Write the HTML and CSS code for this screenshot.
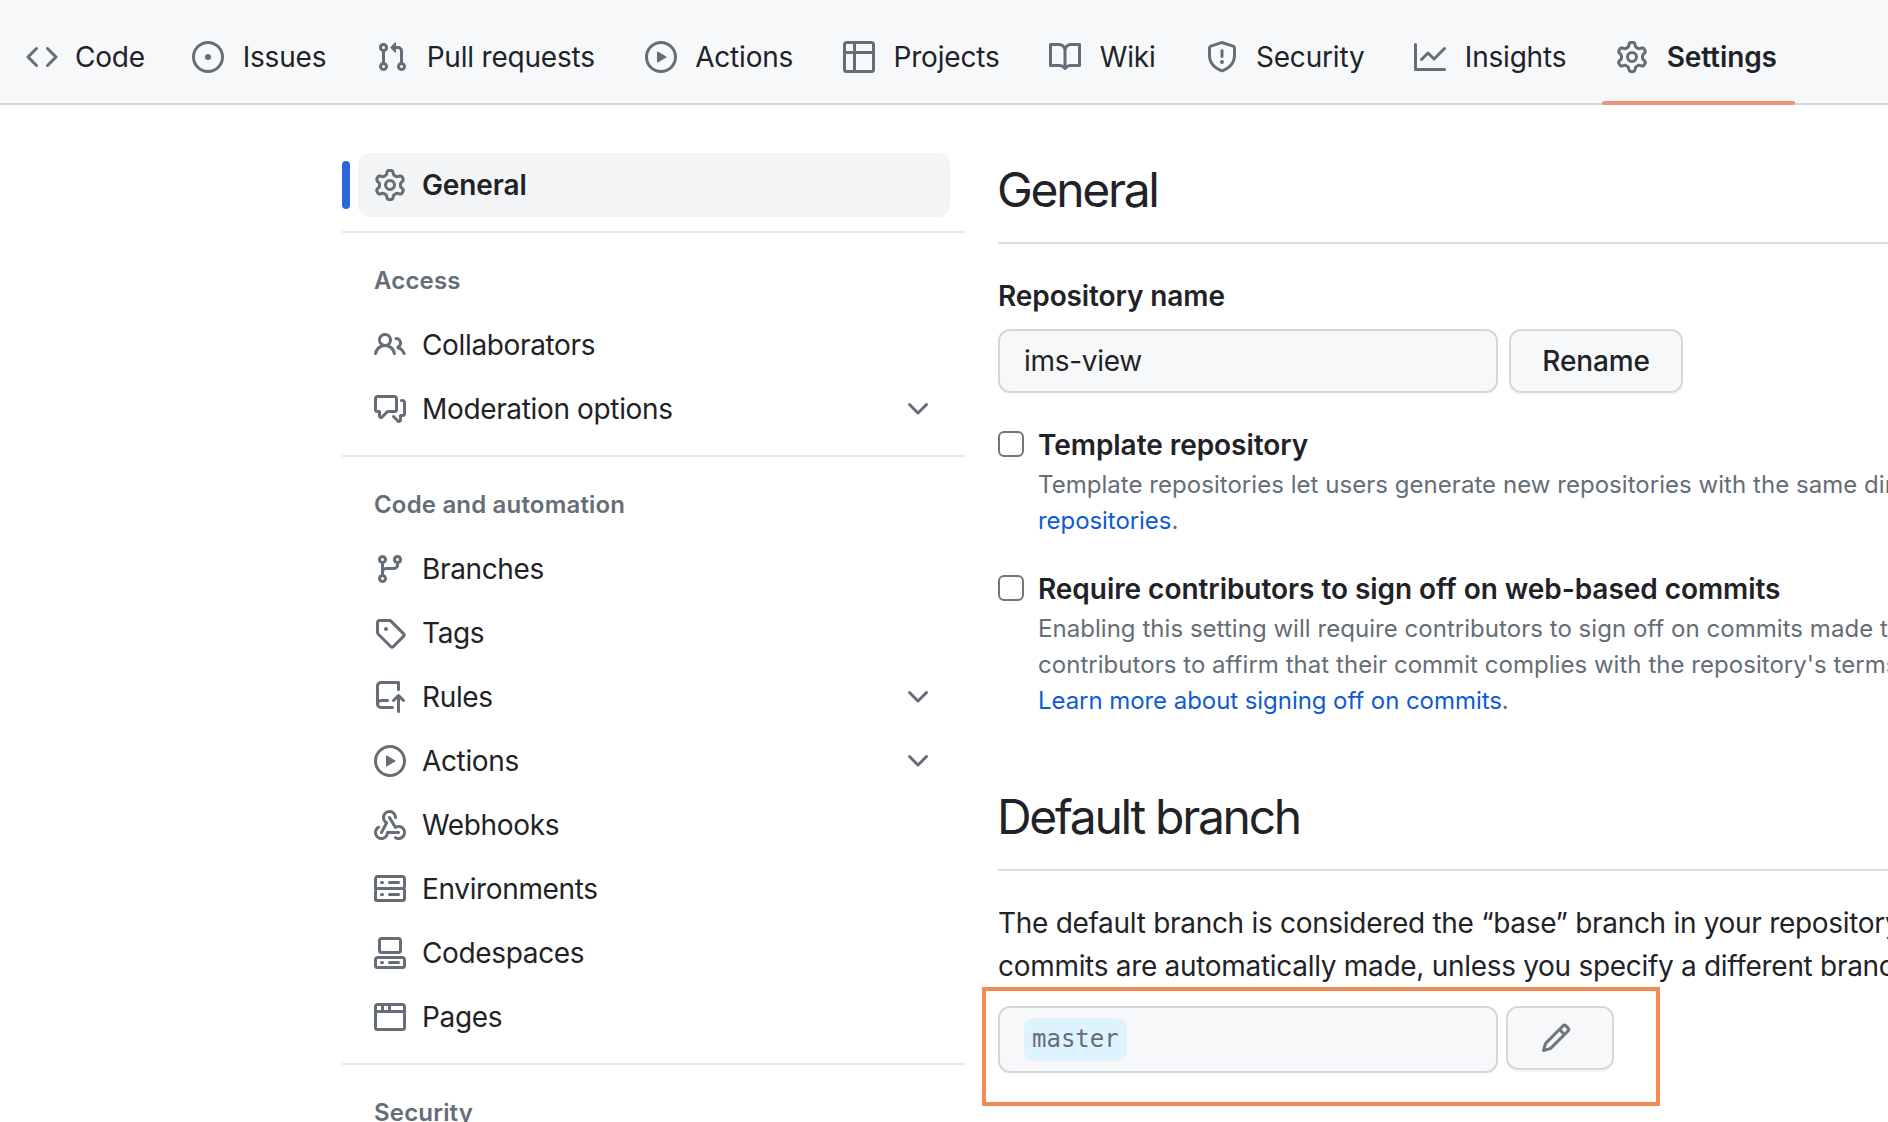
FILE: index.html
```html
<!DOCTYPE html>
<html lang="en">
<head>
    <meta charset="UTF-8">
    <meta name="viewport" content="width=device-width, initial-scale=1.0">
    <title>General - Settings</title>
    <link rel="stylesheet" href="styles.css">
</head>
<body>

    <svg class="icon-defs" aria-hidden="true">
        <symbol id="i-code" viewBox="0 0 16 16"><path d="m11.28 3.22 4.25 4.25a.75.75 0 0 1 0 1.06l-4.25 4.25a.749.749 0 0 1-1.275-.326.749.749 0 0 1 .215-.734L13.94 8l-3.72-3.72a.749.749 0 0 1 .326-1.275.749.749 0 0 1 .734.215Zm-6.56 0a.751.751 0 0 1 1.042.018.751.751 0 0 1 .018 1.042L2.06 8l3.72 3.72a.749.749 0 0 1-.326 1.275.749.749 0 0 1-.734-.215L.47 8.53a.75.75 0 0 1 0-1.06Z"/></symbol>
        <symbol id="i-issue" viewBox="0 0 16 16"><path d="M8 9.5a1.5 1.5 0 1 0 0-3 1.5 1.5 0 0 0 0 3Z"/><path d="M8 0a8 8 0 1 1 0 16A8 8 0 0 1 8 0ZM1.5 8a6.5 6.5 0 1 0 13 0 6.5 6.5 0 0 0-13 0Z"/></symbol>
        <symbol id="i-pull" viewBox="0 0 16 16"><path d="M1.5 3.25a2.25 2.25 0 1 1 3 2.122v5.256a2.251 2.251 0 1 1-1.5 0V5.372A2.25 2.25 0 0 1 1.5 3.25Zm5.677-.177L9.573.677A.25.25 0 0 1 10 .854V2.5h1A2.5 2.5 0 0 1 13.5 5v5.628a2.251 2.251 0 1 1-1.5 0V5a1 1 0 0 0-1-1h-1v1.646a.25.25 0 0 1-.427.177L7.177 3.427a.25.25 0 0 1 0-.354ZM3.75 2.5a.75.75 0 1 0 0 1.5.75.75 0 0 0 0-1.5Zm0 9.5a.75.75 0 1 0 0 1.5.75.75 0 0 0 0-1.5Zm8.25.75a.75.75 0 1 0 1.5 0 .75.75 0 0 0-1.5 0Z"/></symbol>
        <symbol id="i-play" viewBox="0 0 16 16"><path d="M8 0a8 8 0 1 1 0 16A8 8 0 0 1 8 0ZM1.5 8a6.5 6.5 0 1 0 13 0 6.5 6.5 0 0 0-13 0Zm4.879-2.773 4.264 2.559a.25.25 0 0 1 0 .428l-4.264 2.559A.25.25 0 0 1 6 10.559V5.442a.25.25 0 0 1 .379-.215Z"/></symbol>
        <symbol id="i-table" viewBox="0 0 16 16"><path d="M0 1.75C0 .784.784 0 1.75 0h12.5C15.216 0 16 .784 16 1.75v12.5A1.75 1.75 0 0 1 14.25 16H1.75A1.75 1.75 0 0 1 0 14.25ZM6.5 6.5v8h7.75a.25.25 0 0 0 .25-.25V6.5Zm8-1.5V1.75a.25.25 0 0 0-.25-.25H6.5V5Zm-13 1.5v7.75c0 .138.112.25.25.25H5v-8ZM5 5V1.5H1.75a.25.25 0 0 0-.25.25V5Z"/></symbol>
        <symbol id="i-book" viewBox="0 0 16 16"><path d="M0 1.75A.75.75 0 0 1 .75 1h4.253c1.227 0 2.317.59 3 1.501A3.743 3.743 0 0 1 11.006 1h4.245a.75.75 0 0 1 .75.75v10.5a.75.75 0 0 1-.75.75h-4.507a2.25 2.25 0 0 0-1.591.659l-.622.621a.75.75 0 0 1-1.06 0l-.622-.621A2.25 2.25 0 0 0 5.258 13H.75a.75.75 0 0 1-.75-.75Zm7.251 10.324.004-5.073-.002-2.253A2.25 2.25 0 0 0 5.003 2.5H1.5v9h3.757a3.75 3.75 0 0 1 1.994.574ZM8.755 4.75l-.004 7.322a3.752 3.752 0 0 1 1.992-.572H14.5v-9h-3.495a2.25 2.25 0 0 0-2.25 2.25Z"/></symbol>
        <symbol id="i-shield" viewBox="0 0 16 16"><path d="M7.467.133a1.748 1.748 0 0 1 1.066 0l5.25 1.68A1.75 1.75 0 0 1 15 3.48V7c0 1.566-.32 3.182-1.303 4.682-.983 1.498-2.585 2.813-5.032 3.855a1.697 1.697 0 0 1-1.33 0c-2.447-1.042-4.049-2.357-5.032-3.855C1.32 10.182 1 8.566 1 7V3.48a1.75 1.75 0 0 1 1.217-1.667Zm.61 1.429a.25.25 0 0 0-.153 0l-5.25 1.68a.25.25 0 0 0-.174.238V7c0 1.358.275 2.666 1.057 3.86.784 1.194 2.121 2.34 4.366 3.297a.196.196 0 0 0 .154 0c2.245-.956 3.582-2.104 4.366-3.298C13.225 9.666 13.5 8.36 13.5 7V3.48a.251.251 0 0 0-.174-.237l-5.25-1.68ZM8.75 4.75v3a.75.75 0 0 1-1.5 0v-3a.75.75 0 0 1 1.5 0ZM9 10.5a1 1 0 1 1-2 0 1 1 0 0 1 2 0Z"/></symbol>
        <symbol id="i-graph" viewBox="0 0 16 16"><path d="M1.5 1.75V13.5h13.75a.75.75 0 0 1 0 1.5H.75a.75.75 0 0 1-.75-.75V1.75a.75.75 0 0 1 1.5 0Zm14.28 2.53-5.25 5.25a.75.75 0 0 1-1.06 0L7 7.06 4.28 9.78a.751.751 0 0 1-1.042-.018.751.751 0 0 1-.018-1.042l3.25-3.25a.75.75 0 0 1 1.06 0L10 7.94l4.72-4.72a.751.751 0 0 1 1.042.018.751.751 0 0 1 .018 1.042Z"/></symbol>
        <symbol id="i-gear" viewBox="0 0 16 16"><path d="M8 0a8.2 8.2 0 0 1 .701.031C9.444.095 9.99.645 10.16 1.29l.288 1.107c.018.066.079.158.212.224.231.114.454.243.668.386.123.082.233.09.299.071l1.103-.303c.644-.176 1.392.021 1.82.63.27.385.506.792.704 1.218.315.675.111 1.422-.364 1.891l-.814.806c-.049.048-.098.147-.088.294.016.257.016.515 0 .772-.01.147.038.246.088.294l.814.806c.475.469.679 1.216.364 1.891a7.977 7.977 0 0 1-.704 1.217c-.428.61-1.176.807-1.82.63l-1.102-.302c-.067-.019-.177-.011-.3.071a5.909 5.909 0 0 1-.668.386c-.133.066-.194.158-.211.224l-.29 1.106c-.168.646-.715 1.196-1.458 1.26a8.006 8.006 0 0 1-1.402 0c-.743-.064-1.289-.614-1.458-1.26l-.289-1.106c-.018-.066-.079-.158-.212-.224a5.738 5.738 0 0 1-.668-.386c-.123-.082-.233-.09-.299-.071l-1.103.303c-.644.176-1.392-.021-1.82-.63a8.12 8.12 0 0 1-.704-1.218c-.315-.675-.111-1.422.363-1.891l.815-.806c.05-.048.098-.147.088-.294a6.214 6.214 0 0 1 0-.772c.01-.147-.038-.246-.088-.294l-.815-.806C.635 6.045.431 5.298.746 4.623a7.92 7.92 0 0 1 .704-1.217c.428-.61 1.176-.807 1.82-.63l1.102.302c.067.019.177.011.3-.071.214-.143.437-.272.668-.386.133-.066.194-.158.211-.224l.29-1.106C6.009.645 6.556.095 7.299.03 7.53.01 7.764 0 8 0Zm-.571 1.525c-.036.003-.108.036-.137.146l-.289 1.105c-.147.561-.549.967-.998 1.189-.173.086-.34.183-.5.29-.417.278-.97.423-1.529.27l-1.103-.303c-.109-.03-.175.016-.195.045-.22.312-.412.644-.573.99-.014.031-.021.11.059.19l.815.806c.411.406.562.957.53 1.456a4.709 4.709 0 0 0 0 .582c.032.499-.119 1.05-.53 1.456l-.815.806c-.081.08-.073.159-.059.19.162.346.353.677.573.989.02.03.085.076.195.046l1.102-.303c.56-.153 1.113-.008 1.53.27.161.107.328.204.501.29.447.222.85.629.997 1.189l.289 1.105c.029.109.101.143.137.146a6.6 6.6 0 0 0 1.142 0c.036-.003.108-.036.137-.146l.289-1.105c.147-.561.549-.967.998-1.189.173-.086.34-.183.5-.29.417-.278.97-.423 1.529-.27l1.103.303c.109.029.175-.016.195-.045.22-.313.411-.644.573-.99.014-.031.021-.11-.059-.19l-.815-.806c-.411-.406-.562-.957-.53-1.456a4.709 4.709 0 0 0 0-.582c-.032-.499.119-1.05.53-1.456l.815-.806c.081-.08.073-.159.059-.19a6.464 6.464 0 0 0-.573-.989c-.02-.03-.085-.076-.195-.046l-1.102.303c-.56.153-1.113.008-1.53-.27a4.44 4.44 0 0 0-.501-.29c-.447-.222-.85-.629-.997-1.189l-.289-1.105c-.029-.11-.101-.143-.137-.146a6.6 6.6 0 0 0-1.142 0ZM11 8a3 3 0 1 1-6 0 3 3 0 0 1 6 0ZM9.5 8a1.5 1.5 0 1 0-3.001.001A1.5 1.5 0 0 0 9.5 8Z"/></symbol>
        <symbol id="i-people" viewBox="0 0 16 16"><path d="M2 5.5a3.5 3.5 0 1 1 5.898 2.549 5.508 5.508 0 0 1 3.034 4.084.75.75 0 1 1-1.482.235 4 4 0 0 0-7.9 0 .75.75 0 0 1-1.482-.236A5.507 5.507 0 0 1 3.102 8.05 3.493 3.493 0 0 1 2 5.5ZM11 4a3.001 3.001 0 0 1 2.22 5.018 5.01 5.01 0 0 1 2.56 3.012.749.749 0 0 1-.885.954.752.752 0 0 1-.549-.514 3.507 3.507 0 0 0-2.522-2.372.75.75 0 0 1-.574-.73v-.352a.75.75 0 0 1 .416-.672A1.5 1.5 0 0 0 11 5.5.75.75 0 0 1 11 4Zm-5.5-.5a2 2 0 1 0-.001 3.999A2 2 0 0 0 5.5 3.5Z"/></symbol>
        <symbol id="i-comments" viewBox="0 0 16 16"><path d="M1.75 1h8.5c.966 0 1.75.784 1.75 1.75v5.5A1.75 1.75 0 0 1 10.25 10H7.061l-2.574 2.573A1.458 1.458 0 0 1 2 11.543V10h-.25A1.75 1.75 0 0 1 0 8.25v-5.5C0 1.784.784 1 1.75 1ZM1.5 2.75v5.5c0 .138.112.25.25.25h1a.75.75 0 0 1 .75.75v2.19l2.72-2.72a.749.749 0 0 1 .53-.22h3.5a.25.25 0 0 0 .25-.25v-5.5a.25.25 0 0 0-.25-.25h-8.5a.25.25 0 0 0-.25.25Zm13 2a.25.25 0 0 0-.25-.25h-.5a.75.75 0 0 1 0-1.5h.5c.966 0 1.75.784 1.75 1.75v5.5A1.75 1.75 0 0 1 14.25 12H14v1.543a1.458 1.458 0 0 1-2.487 1.03L9.22 12.28a.749.749 0 0 1 .326-1.275.749.749 0 0 1 .734.215l2.22 2.22v-2.19a.75.75 0 0 1 .75-.75h1a.25.25 0 0 0 .25-.25Z"/></symbol>
        <symbol id="i-branch" viewBox="0 0 16 16"><path d="M9.5 3.25a2.25 2.25 0 1 1 3 2.122V6A2.5 2.5 0 0 1 10 8.5H6a1 1 0 0 0-1 1v1.128a2.251 2.251 0 1 1-1.5 0V5.372a2.25 2.25 0 1 1 1.5 0v1.836A2.493 2.493 0 0 1 6 7h4a1 1 0 0 0 1-1v-.628A2.25 2.25 0 0 1 9.5 3.25Zm-6 0a.75.75 0 1 0 1.5 0 .75.75 0 0 0-1.5 0Zm8.25-.75a.75.75 0 1 0 0 1.5.75.75 0 0 0 0-1.5ZM4.25 12a.75.75 0 1 0 0 1.5.75.75 0 0 0 0-1.5Z"/></symbol>
        <symbol id="i-tag" viewBox="0 0 16 16"><path d="M1 7.775V2.75C1 1.784 1.784 1 2.75 1h5.025c.464 0 .91.184 1.238.513l6.25 6.25a1.75 1.75 0 0 1 0 2.474l-5.026 5.026a1.75 1.75 0 0 1-2.474 0l-6.25-6.25A1.752 1.752 0 0 1 1 7.775Zm1.5 0c0 .066.026.13.073.177l6.25 6.25a.25.25 0 0 0 .354 0l5.025-5.025a.25.25 0 0 0 0-.354l-6.25-6.25a.25.25 0 0 0-.177-.073H2.75a.25.25 0 0 0-.25.25ZM6 5a1 1 0 1 1 0 2 1 1 0 0 1 0-2Z"/></symbol>
        <symbol id="i-rules" viewBox="0 0 16 16"><path d="M1 2.5A2.5 2.5 0 0 1 3.5 0h8.75a.75.75 0 0 1 .75.75v3.5a.75.75 0 0 1-1.5 0V1.5h-8a1 1 0 0 0-1 1v6.708A2.493 2.493 0 0 1 3.5 9h3.25a.75.75 0 0 1 0 1.5H3.5a1 1 0 0 0 0 2h5.75a.75.75 0 0 1 0 1.5H3.5A2.5 2.5 0 0 1 1 11.5Zm13.23 7.79h-.001l-1.224-1.224v6.184a.75.75 0 0 1-1.5 0V9.066L10.28 10.29a.75.75 0 0 1-1.06-1.061l2.505-2.504a.75.75 0 0 1 1.06 0L15.29 9.23a.751.751 0 0 1-.018 1.042.751.751 0 0 1-1.042.018Z"/></symbol>
        <symbol id="i-webhook" viewBox="0 0 16 16"><path d="M5.5 4.25a2.25 2.25 0 0 1 4.5 0 .75.75 0 0 0 1.5 0 3.75 3.75 0 1 0-6.14 2.889l-2.272 4.258a.75.75 0 0 0 1.324.706L7 7.25a.75.75 0 0 0-.309-1.015A2.25 2.25 0 0 1 5.5 4.25Z"/><path d="M7.364 3.607a.75.75 0 0 1 1.03.257l2.608 4.349a3.75 3.75 0 1 1-.628 6.785.75.75 0 0 1 .752-1.299 2.25 2.25 0 1 0-.033-3.88.75.75 0 0 1-1.03-.256L7.107 4.636a.75.75 0 0 1 .257-1.03Z"/><path d="M2.9 8.776A.75.75 0 0 1 2.625 9.8 2.25 2.25 0 1 0 6 11.75a.75.75 0 0 1 .75-.751h5.5a.75.75 0 0 1 0 1.5H7.425a3.751 3.751 0 1 1-5.55-3.998.75.75 0 0 1 1.024.274Z"/></symbol>
        <symbol id="i-server" viewBox="0 0 16 16"><path d="M1.75 1h12.5c.966 0 1.75.784 1.75 1.75v4c0 .372-.116.717-.314 1 .198.283.314.628.314 1v4a1.75 1.75 0 0 1-1.75 1.75H1.75A1.75 1.75 0 0 1 0 13.75v-4c0-.372.116-.717.314-1a1.739 1.739 0 0 1-.314-1v-4C0 1.784.784 1 1.75 1ZM1.5 2.75v4c0 .138.112.25.25.25h12.5a.25.25 0 0 0 .25-.25v-4a.25.25 0 0 0-.25-.25H1.75a.25.25 0 0 0-.25.25Zm.25 5.75a.25.25 0 0 0-.25.25v4c0 .138.112.25.25.25h12.5a.25.25 0 0 0 .25-.25v-4a.25.25 0 0 0-.25-.25ZM7 4.75A.75.75 0 0 1 7.75 4h4.5a.75.75 0 0 1 0 1.5h-4.5A.75.75 0 0 1 7 4.75ZM7.75 10h4.5a.75.75 0 0 1 0 1.5h-4.5a.75.75 0 0 1 0-1.5ZM3 4.75A.75.75 0 0 1 3.75 4h.5a.75.75 0 0 1 0 1.5h-.5A.75.75 0 0 1 3 4.75ZM3.75 10h.5a.75.75 0 0 1 0 1.5h-.5a.75.75 0 0 1 0-1.5Z"/></symbol>
        <symbol id="i-codespaces" viewBox="0 0 16 16"><path d="M0 11.25c0-.966.784-1.75 1.75-1.75h12.5c.966 0 1.75.784 1.75 1.75v3A1.75 1.75 0 0 1 14.25 16H1.75A1.75 1.75 0 0 1 0 14.25Zm2-9.5C2 .784 2.784 0 3.75 0h8.5C13.216 0 14 .784 14 1.75v5a1.75 1.75 0 0 1-1.75 1.75h-8.5A1.75 1.75 0 0 1 2 6.75Zm1.75-.25a.25.25 0 0 0-.25.25v5c0 .138.112.25.25.25h8.5a.25.25 0 0 0 .25-.25v-5a.25.25 0 0 0-.25-.25Zm-2 9.5a.25.25 0 0 0-.25.25v3c0 .138.112.25.25.25h12.5a.25.25 0 0 0 .25-.25v-3a.25.25 0 0 0-.25-.25Z"/><path d="M7 12.75a.75.75 0 0 1 .75-.75h4.5a.75.75 0 0 1 0 1.5h-4.5a.75.75 0 0 1-.75-.75Zm-4 0a.75.75 0 0 1 .75-.75h.5a.75.75 0 0 1 0 1.5h-.5a.75.75 0 0 1-.75-.75Z"/></symbol>
        <symbol id="i-browser" viewBox="0 0 16 16"><path d="M0 2.75C0 1.784.784 1 1.75 1h12.5c.966 0 1.75.784 1.75 1.75v10.5A1.75 1.75 0 0 1 14.25 15H1.75A1.75 1.75 0 0 1 0 13.25ZM14.5 6h-13v7.25c0 .138.112.25.25.25h12.5a.25.25 0 0 0 .25-.25Zm-6-3.5v2h6V2.75a.25.25 0 0 0-.25-.25ZM5 2.5v2h2v-2Zm-3.25 0a.25.25 0 0 0-.25.25V4.5h2v-2Z"/></symbol>
        <symbol id="i-pencil" viewBox="0 0 16 16"><path d="M11.013 1.427a1.75 1.75 0 0 1 2.474 0l1.086 1.086a1.75 1.75 0 0 1 0 2.474l-8.61 8.61c-.21.21-.47.364-.756.445l-3.251.93a.75.75 0 0 1-.927-.928l.929-3.25c.081-.286.235-.547.445-.758l8.61-8.61Zm.176 4.823L9.75 4.81l-6.286 6.287a.253.253 0 0 0-.064.108l-.558 1.953 1.953-.558a.253.253 0 0 0 .108-.064Zm1.238-3.763a.25.25 0 0 0-.354 0L10.811 3.75l1.439 1.44 1.263-1.263a.25.25 0 0 0 0-.354Z"/></symbol>
        <symbol id="i-chevron" viewBox="0 0 16 16"><path d="M12.78 5.22a.749.749 0 0 1 0 1.06l-4.25 4.25a.749.749 0 0 1-1.06 0L3.22 6.28a.749.749 0 1 1 1.06-1.06L8 8.939l3.72-3.719a.749.749 0 0 1 1.06 0Z"/></symbol>
    </svg>

    <nav class="repo-nav">
        <a class="tab"><svg class="icon"><use href="#i-code"/></svg>Code</a>
        <a class="tab"><svg class="icon"><use href="#i-issue"/></svg>Issues</a>
        <a class="tab"><svg class="icon"><use href="#i-pull"/></svg>Pull requests</a>
        <a class="tab"><svg class="icon"><use href="#i-play"/></svg>Actions</a>
        <a class="tab"><svg class="icon"><use href="#i-table"/></svg>Projects</a>
        <a class="tab"><svg class="icon"><use href="#i-book"/></svg>Wiki</a>
        <a class="tab"><svg class="icon"><use href="#i-shield"/></svg>Security</a>
        <a class="tab"><svg class="icon"><use href="#i-graph"/></svg>Insights</a>
        <a class="tab tab-current"><svg class="icon"><use href="#i-gear"/></svg>Settings</a>
    </nav>

    <div class="layout">
        <aside class="sidebar">
            <a class="side-item side-current"><svg class="icon"><use href="#i-gear"/></svg>General</a>

            <hr class="side-divider">
            <h3 class="side-heading">Access</h3>
            <a class="side-item"><svg class="icon"><use href="#i-people"/></svg>Collaborators</a>
            <a class="side-item"><svg class="icon"><use href="#i-comments"/></svg>Moderation options<svg class="icon chevron"><use href="#i-chevron"/></svg></a>

            <hr class="side-divider">
            <h3 class="side-heading">Code and automation</h3>
            <a class="side-item"><svg class="icon"><use href="#i-branch"/></svg>Branches</a>
            <a class="side-item"><svg class="icon"><use href="#i-tag"/></svg>Tags</a>
            <a class="side-item"><svg class="icon"><use href="#i-rules"/></svg>Rules<svg class="icon chevron"><use href="#i-chevron"/></svg></a>
            <a class="side-item"><svg class="icon"><use href="#i-play"/></svg>Actions<svg class="icon chevron"><use href="#i-chevron"/></svg></a>
            <a class="side-item"><svg class="icon"><use href="#i-webhook"/></svg>Webhooks</a>
            <a class="side-item"><svg class="icon"><use href="#i-server"/></svg>Environments</a>
            <a class="side-item"><svg class="icon"><use href="#i-codespaces"/></svg>Codespaces</a>
            <a class="side-item"><svg class="icon"><use href="#i-browser"/></svg>Pages</a>

            <hr class="side-divider">
            <h3 class="side-heading">Security</h3>
        </aside>

        <main class="content">
            <h2 class="section-title">General</h2>

            <label class="field-label">Repository name</label>
            <div class="field-row">
                <div class="text-box">ims-view</div>
                <button class="btn">Rename</button>
            </div>

            <div class="check-item first-check">
                <span class="checkbox"></span>
                <div>
                    <div class="check-title">Template repository</div>
                    <p class="note">Template repositories let users generate new repositories with the same directory structure and files. <a class="link">Learn more about template</a><br><a class="link">repositories</a>.</p>
                </div>
            </div>

            <div class="check-item">
                <span class="checkbox"></span>
                <div>
                    <div class="check-title">Require contributors to sign off on web-based commits</div>
                    <p class="note">Enabling this setting will require contributors to sign off on commits made through GitHub's web interface. Signing off is a way for<br>contributors to affirm that their commit complies with the repository's terms, commonly the Developer Certificate of Origin.<br><a class="link">Learn more about signing off on commits</a>.</p>
                </div>
            </div>

            <h2 class="section-title second-title">Default branch</h2>

            <p class="lead">The default branch is considered the “base” branch in your repository, against which all pull requests and code<br>commits are automatically made, unless you specify a different branch.</p>

            <div class="highlight-box">
                <div class="text-box branch-box"><code class="branch-chip">master</code></div>
                <button class="btn btn-icon"><svg class="icon"><use href="#i-pencil"/></svg></button>
            </div>
        </main>
    </div>

</body>
</html>
```

FILE: styles.css
```css
html, body {
    height: 100%;
}
body {
    margin: 0;
    overflow: hidden;
    background-color: #fff;
    color: #1f2328;
    font-family: Inter, "Liberation Sans", sans-serif;
    font-size: 28px;
    letter-spacing: -0.3px;
    line-height: 1.5;
}
.icon-defs {
    display: none;
}
.icon {
    width: 32px;
    height: 32px;
    flex: none;
    fill: #656d76;
}

/* repo tabs */
.repo-nav {
    display: flex;
    gap: 18px;
    height: 103px;
    padding-left: 10px;
    background-color: #f6f8fa;
    border-bottom: 2px solid #d0d7de;
    letter-spacing: -0.2px;
}
.tab {
    position: relative;
    display: flex;
    align-items: center;
    gap: 18.4px;
    padding: 10px 16px 0;
    white-space: nowrap;
}
.tab:first-child {
    gap: 17px;
    padding-right: 13.4px;
}
.tab-current {
    font-weight: 600;
    letter-spacing: -0.1px;
}
.tab-current::after {
    content: "";
    position: absolute;
    left: 2px;
    right: -2px;
    bottom: -2px;
    height: 4px;
    border-radius: 2px;
    background-color: #f0917a;
}

.layout {
    display: flex;
    gap: 32px;
    padding: 48px 0 0 342px;
}

/* left menu */
.sidebar {
    flex: none;
    width: 624px;
}
.side-item {
    position: relative;
    display: flex;
    align-items: center;
    gap: 16px;
    height: 64px;
    margin: 0 16px;
    padding: 0 16px;
    letter-spacing: -0.35px;
}
.side-current {
    background-color: #f3f4f6;
    border-radius: 12px;
    font-weight: 600;
    letter-spacing: -0.1px;
}
.side-current::before {
    content: "";
    position: absolute;
    left: -16px;
    top: 8px;
    width: 8px;
    height: 48px;
    border-radius: 4px;
    background-color: #2b67d9;
}
.chevron {
    margin-left: auto;
}
.side-divider {
    height: 2px;
    margin: 14px 0 0;
    border: 0;
    background-color: #e6e9ec;
}
.side-heading {
    margin: 24px 0 8px;
    padding-left: 32px;
    color: #656d76;
    font-size: 24px;
    font-weight: 600;
    letter-spacing: 0.18px;
    line-height: 48px;
}

/* settings column */
.content {
    flex: 1;
    min-width: 0;
    white-space: nowrap;
}
.section-title {
    margin: 1px 0 0;
    padding-bottom: 16px;
    border-bottom: 2px solid #d7dce1;
    font-size: 48px;
    font-weight: 400;
    letter-spacing: -2.3px;
    line-height: 72px;
    text-indent: -1px;
}
.second-title {
    margin-top: 62px;
}
.field-label {
    display: block;
    margin: 31px 0 12px;
    font-weight: 600;
    letter-spacing: -0.1px;
    line-height: 42px;
}
.field-row {
    display: flex;
    gap: 11px;
}
.text-box {
    box-sizing: border-box;
    width: 500px;
    height: 64px;
    padding: 0 24px;
    background-color: #f6f8fa;
    border: 2px solid #d0d7de;
    border-radius: 12px;
    line-height: 60px;
}
.btn {
    width: 174px;
    height: 64px;
    padding: 0;
    background-color: #f6f8fa;
    border: 2px solid #d5d9de;
    border-radius: 12px;
    box-shadow: 0 2px 0 rgba(31, 35, 40, 0.04);
    color: #1f2328;
    font: 500 28px Inter, "Liberation Sans", sans-serif;
    letter-spacing: -0.15px;
}
.check-item {
    display: flex;
    gap: 14px;
    margin-top: 29px;
}
.first-check {
    margin-top: 31px;
}
.checkbox {
    box-sizing: border-box;
    flex: none;
    width: 26px;
    height: 26px;
    margin-top: 7px;
    background-color: #fff;
    border: 2px solid #6e7781;
    border-radius: 6px;
}
.check-title {
    font-weight: 600;
    letter-spacing: -0.05px;
    line-height: 42px;
}
.note {
    margin: 1px 0 0;
    color: #656d76;
    font-size: 24px;
    letter-spacing: 0.04px;
    line-height: 36px;
}
.link {
    color: #0f5bd3;
    letter-spacing: -0.06px;
}
.lead {
    margin: 31px 0 0;
    line-height: 43px;
}

/* the marked block */
.highlight-box {
    box-sizing: border-box;
    display: flex;
    align-items: flex-start;
    gap: 8px;
    width: 678px;
    height: 119px;
    margin: -1px 0 0 -16px;
    padding: 15px 0 0 12px;
    border: 4px solid #f28c55;
}
.branch-box {
    display: flex;
    align-items: center;
    height: 67px;
    padding: 0 24px;
}
.branch-chip {
    padding: 5px 8px;
    background-color: #ddf4ff;
    border-radius: 10px;
    color: #656d76;
    font-family: "DejaVu Sans Mono", monospace;
    font-size: 24px;
    letter-spacing: 0;
    line-height: 33px;
}
.btn-icon {
    display: flex;
    align-items: center;
    justify-content: center;
    width: 108px;
    height: 64px;
    padding-right: 8px;
}
.btn-icon .icon {
    fill: #6e7781;
}
```
